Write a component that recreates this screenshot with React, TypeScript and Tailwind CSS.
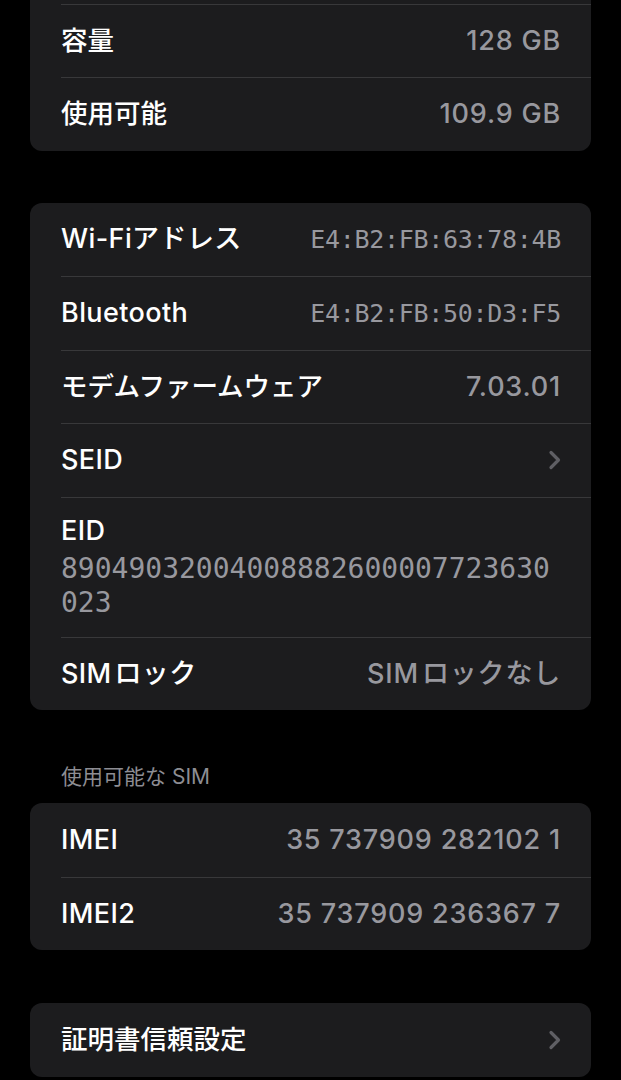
import React from "react";

const sans = "font-['Inter','Noto_Sans_CJK_JP',sans-serif]";
const mono = "font-['DejaVu_Sans_Mono','Noto_Sans_CJK_JP',monospace]";

type RowProps = {
  label: string;
  value?: string;
  mono?: boolean;
  chevron?: boolean;
  first?: boolean;
  cjk?: boolean;
};

function Chevron() {
  return (
    <svg width="13" height="20" viewBox="0 0 13 20" fill="none" className="shrink-0">
      <path
        d="M3 2.5 L10.5 10 L3 17.5"
        stroke="#5f5f64"
        strokeWidth="3.2"
        strokeLinecap="round"
        strokeLinejoin="round"
      />
    </svg>
  );
}

function Row({ label, value, mono: isMono, chevron, first, cjk }: RowProps) {
  return (
    <div
      className={`ml-[31px] pr-[30px] h-[73.5px] flex items-center justify-between ${
        first ? "" : "border-t border-[#38383a]"
      }`}
    >
      <span
        className={`text-white font-medium ${
          cjk ? "text-[26.5px]" : "text-[27px] tracking-[0.4px]"
        }`}
      >
        {label}
      </span>
      {value && (
        <span
          className={
            isMono
              ? `${mono} text-[25px] tracking-[-0.3px] text-[#98989e]`
              : "text-[27px] font-medium tracking-[0.8px] text-[#98989e]"
          }
        >
          {value}
        </span>
      )}
      {chevron && <Chevron />}
    </div>
  );
}

function Card({ children, className = "" }: { children: React.ReactNode; className?: string }) {
  return <div className={`bg-[#1c1c1e] rounded-[12px] overflow-hidden ${className}`}>{children}</div>;
}

export default function App() {
  return (
    <div className={`min-h-screen bg-black overflow-hidden ${sans}`}>
      <div className="px-[30px] pb-10">
        <Card className="-mt-[70px]">
          <Row label="" first />
          <Row label="容量" value="128 GB" cjk />
          <Row label="使用可能" value="109.9 GB" cjk />
        </Card>

        <Card className="mt-[52px]">
          <Row label="Wi-Fiアドレス" value="E4:B2:FB:63:78:4B" mono first />
          <Row label="Bluetooth" value="E4:B2:FB:50:D3:F5" mono />
          <Row label="モデムファームウェア" value="7.03.01" cjk />
          <Row label="SEID" chevron />
          <div className="ml-[31px] pr-[30px] border-t border-[#38383a] pt-[16px] pb-[17px]">
            <div className="text-white text-[27px] font-medium tracking-[0.4px] leading-[34px]">EID</div>
            <div className={`${mono} mt-[4px] text-[28px] leading-[34px] text-[#98989e] break-all`}>
              89049032004008882600007723630023
            </div>
          </div>
          <Row label={"SIM\u200Aロック"} value={"SIM\u200Aロックなし"} />
        </Card>

        <div className="mt-[53px] mb-[12px] pl-[31px] text-[21px] leading-[28px] text-[#8d8d93]">
          使用可能な SIM
        </div>

        <Card>
          <Row label="IMEI" value="35 737909 282102 1" first />
          <Row label="IMEI2" value="35 737909 236367 7" />
        </Card>

        <Card className="mt-[53px]">
          <Row label="証明書信頼設定" chevron first cjk />
        </Card>
      </div>
    </div>
  );
}
